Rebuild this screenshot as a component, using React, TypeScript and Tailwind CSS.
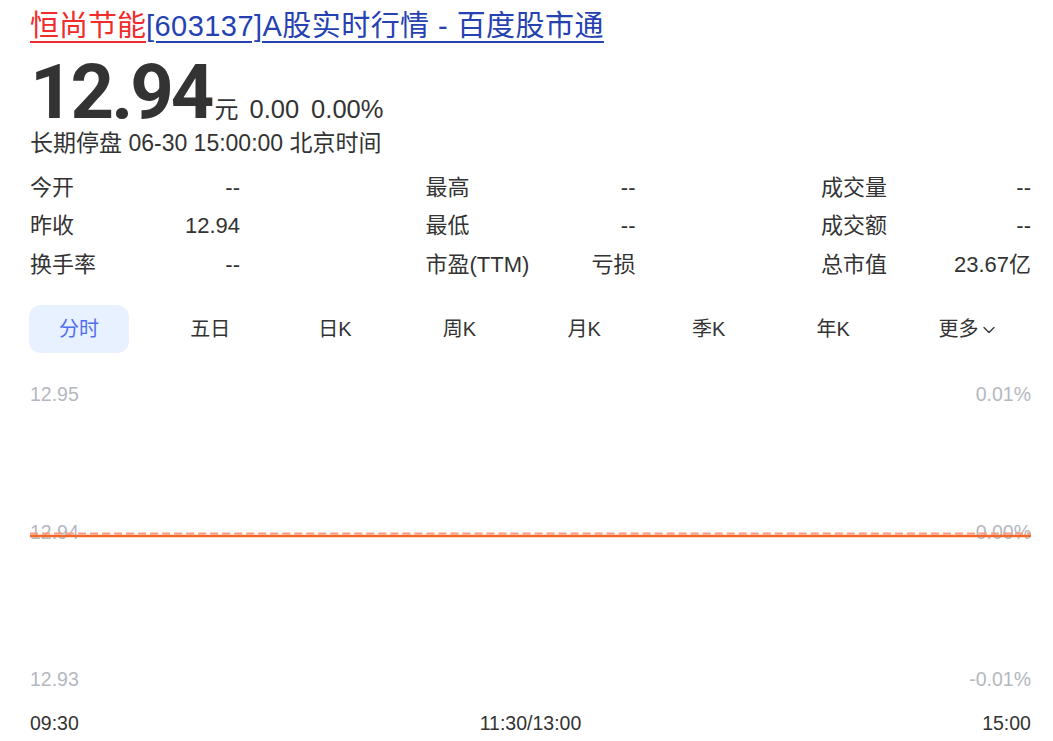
import { ChevronDown } from 'lucide-react';

const stats = [
    [
        { label: '今开', value: '--' },
        { label: '昨收', value: '12.94' },
        { label: '换手率', value: '--' },
    ],
    [
        { label: '最高', value: '--' },
        { label: '最低', value: '--' },
        { label: '市盈(TTM)', value: '亏损' },
    ],
    [
        { label: '成交量', value: '--' },
        { label: '成交额', value: '--' },
        { label: '总市值', value: '23.67亿' },
    ],
];

const tabs = ['五日', '日K', '周K', '月K', '季K', '年K'];

export default function App() {
    return (
        <div className="min-h-screen bg-white pl-[30px] pr-[22px] pt-[8px] text-[#333] font-['Liberation_Sans','Noto_Sans_CJK_SC',sans-serif]">
            {/* Title */}
            <h1 className="text-[29px] leading-[36px] whitespace-nowrap">
                <a href="#" className="text-[#f02c2c] underline underline-offset-[5px] decoration-2">恒尚节能</a>
                <a href="#" className="text-[#2541b2] underline underline-offset-[5px] decoration-2 tracking-[0.45px]">[603137]A股实时行情 - 百度股市通</a>
            </h1>

            {/* Price */}
            <div className="flex items-baseline mt-[12px] h-[72px]">
                <span className="font-['Roboto',sans-serif] font-bold text-[76px] leading-[72px] tracking-[-3px] text-[#333]">12.94</span>
                <span className="text-[24px] leading-none ml-[3px]">元</span>
                <span className="text-[25.5px] leading-none ml-[11px]">0.00</span>
                <span className="text-[25.5px] leading-none ml-[12px]">0.00%</span>
            </div>
            <div className="text-[23px] leading-[30px]">长期停盘 06-30 15:00:00 北京时间</div>

            {/* Stats */}
            <div className="flex justify-between mt-[10px] text-[22px]">
                {stats.map((col, i) => (
                    <div key={i} className="w-[210px] flex flex-col">
                        {col.map((row) => (
                            <div key={row.label} className="flex justify-between items-center h-[38.5px]">
                                <span>{row.label}</span>
                                <span>{row.value}</span>
                            </div>
                        ))}
                    </div>
                ))}
            </div>

            {/* Tabs */}
            <div className="flex items-center mt-[21px] text-[20px] h-[48px]">
                <div className="w-[100px] h-[48px] ml-[-1px] rounded-[12px] bg-[#e8f1ff] text-[#4e6ef2] flex items-center justify-center">分时</div>
                <div className="flex ml-[19px]">
                    {tabs.map((t) => (
                        <div key={t} className="w-[124.6px] flex justify-center">{t}</div>
                    ))}
                    <div className="flex items-center pl-[43px]">
                        更多<ChevronDown className="w-[20px] h-[20px] mt-[2px]" strokeWidth={1.5} />
                    </div>
                </div>
            </div>

            {/* Chart */}
            <div className="relative mt-[30px] text-[19.5px] leading-[22px] text-[#b4b8c0]">
                <svg className="absolute left-0 top-[149px] w-full h-[6px]" preserveAspectRatio="none" viewBox="0 0 1000 6">
                    <line x1="0" y1="1.5" x2="1000" y2="1.5" stroke="#f89c85" strokeWidth="2" strokeDasharray="8 4" />
                    <line x1="0" y1="4" x2="1000" y2="4" stroke="#f26a2a" strokeWidth="2.5" />
                </svg>
                <div className="flex justify-between">
                    <div className="flex flex-col">
                        <span>12.95</span>
                        <span className="mt-[116px]">12.94</span>
                        <span className="mt-[125px]">12.93</span>
                    </div>
                    <div className="flex flex-col items-end">
                        <span>0.01%</span>
                        <span className="mt-[116px]">0.00%</span>
                        <span className="mt-[125px]">-0.01%</span>
                    </div>
                </div>
                <div className="flex justify-between mt-[22px] text-[#333]">
                    <span>09:30</span>
                    <span>11:30/13:00</span>
                    <span>15:00</span>
                </div>
            </div>
        </div>
    );
}
